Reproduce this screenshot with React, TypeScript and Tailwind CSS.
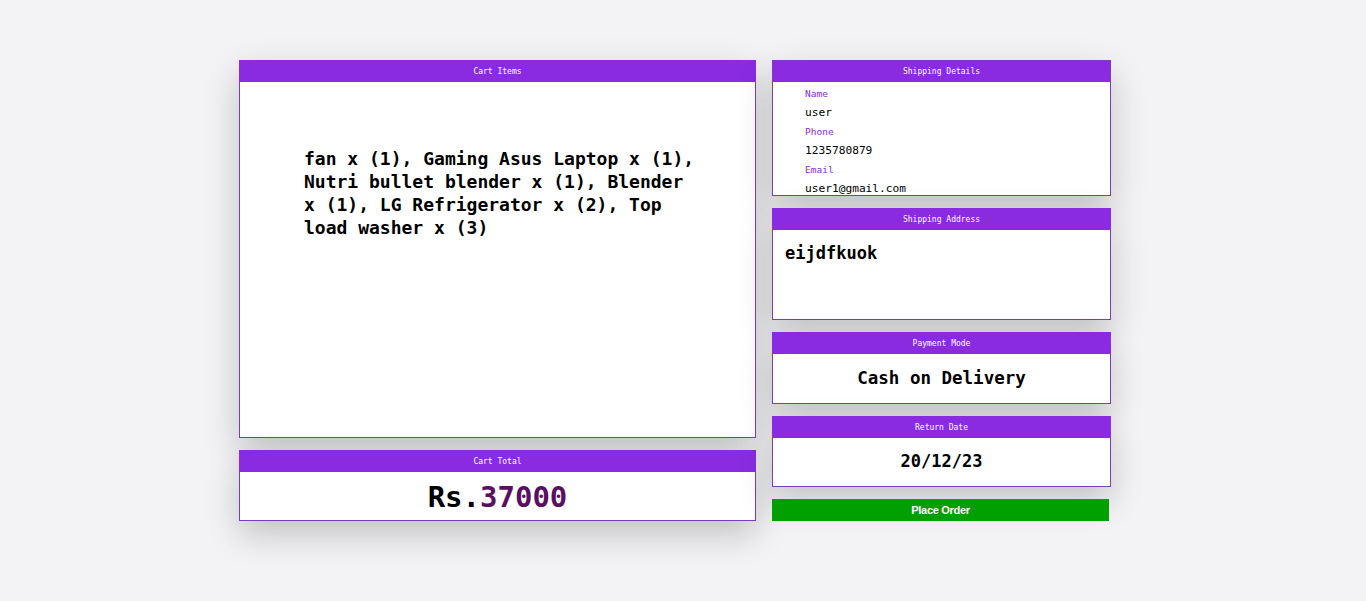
import React from 'react';

const mono = "font-['DejaVu_Sans_Mono',monospace]";

const Card: React.FC<{ title: string; className?: string; children: React.ReactNode }> = ({ title, className = '', children }) => (
  <div className={`flex flex-col bg-white border border-[#7a3cc0] shadow-[0_14px_34px_rgba(0,0,0,0.2)] ${className}`}>
    <div className={`h-[22px] shrink-0 bg-[#8a2be2] text-white text-[8px] pt-[2px] ${mono} flex items-center justify-center -mx-px -mt-px`}>
      {title}
    </div>
    {children}
  </div>
);

const App: React.FC = () => {
  const items = [
    'fan x (1)',
    'Gaming Asus Laptop x (1)',
    'Nutri bullet blender x (1)',
    'Blender x (1)',
    'LG Refrigerator x (2)',
    'Top load washer x (3)',
  ];

  const details = [
    { label: 'Name', value: 'user' },
    { label: 'Phone', value: '1235780879' },
    { label: 'Email', value: 'user1@gmail.com' },
  ];

  return (
    <div className={`min-h-[601px] bg-[#f3f3f5] pt-[60px] ${mono}`}>
      <div className="flex gap-[16px] ml-[239px]">
        {/* Left column */}
        <div className="w-[517px] flex flex-col gap-[12px]">
          <Card title="Cart Items" className="h-[378px]">
            <div className="pt-[65px] pl-[64px]">
              <p className="w-[396px] text-[18px] font-bold leading-[23px] text-black">
                {items.join(', ')}
              </p>
            </div>
          </Card>
          <Card title="Cart Total" className="h-[71px]">
            <div className="flex-1 flex items-center justify-center text-[29px] font-bold pt-[3px]">
              <span className="text-black">Rs.</span>
              <span className="text-[#5a1060]">37000</span>
            </div>
          </Card>
        </div>

        {/* Right column */}
        <div className="w-[339px] flex flex-col gap-[12px]">
          <Card title="Shipping Details" className="h-[136px] overflow-hidden">
            <div className="pl-[32px] pt-[2px] flex flex-col">
              {details.map((d) => (
                <React.Fragment key={d.label}>
                  <span className="text-[9.5px] leading-[19px] text-[#8a2be2]">{d.label}</span>
                  <span className="text-[11.2px] leading-[19px] text-black">{d.value}</span>
                </React.Fragment>
              ))}
            </div>
          </Card>
          <Card title="Shipping Address" className="h-[112px]">
            <div className="pl-[12px] pt-[12px] text-[17px] font-bold leading-[22px] text-black">eijdfkuok</div>
          </Card>
          <Card title="Payment Mode" className="h-[72px]">
            <div className="flex-1 flex items-center justify-center text-[17.5px] font-bold text-black">
              Cash on Delivery
            </div>
          </Card>
          <Card title="Return Date" className="h-[71px]">
            <div className="flex-1 flex items-center justify-center text-[17px] font-bold text-black">
              20/12/23
            </div>
          </Card>
          <button className="w-[337px] h-[22px] bg-[#00a000] text-white text-[11px] font-bold font-['Liberation_Sans',Arial,sans-serif] tracking-[-0.3px] flex items-center justify-center">
            Place Order
          </button>
        </div>
      </div>
    </div>
  );
};

export default App;
